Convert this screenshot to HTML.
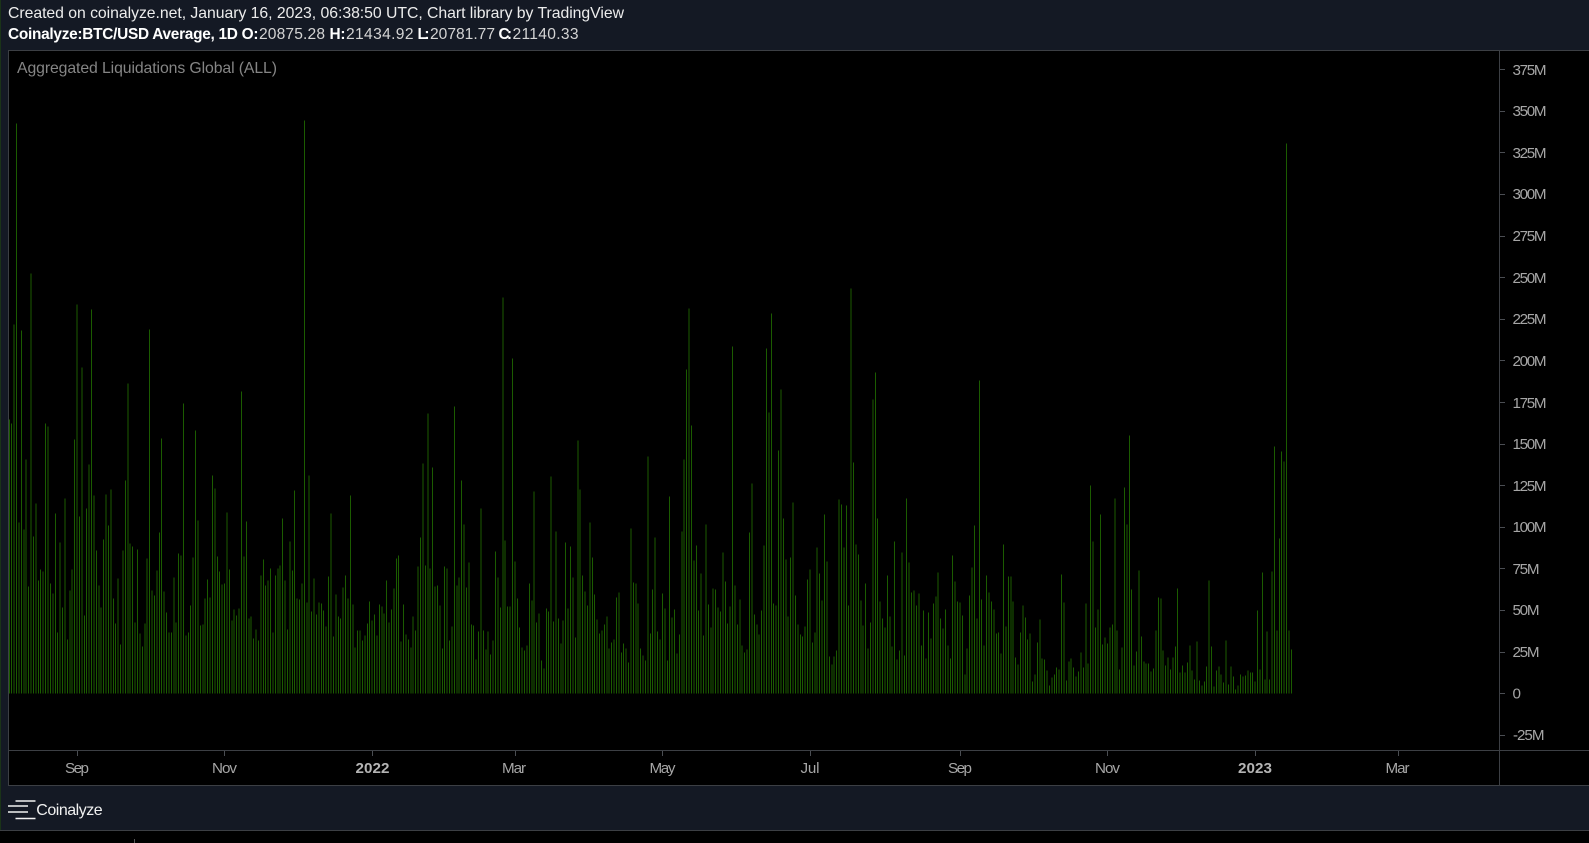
<!DOCTYPE html>
<html><head><meta charset="utf-8"><title>Aggregated Liquidations Global (ALL)</title>
<style>
html,body{margin:0;padding:0;background:#000;width:1589px;height:843px;overflow:hidden}
svg{display:block;font-family:"Liberation Sans",sans-serif}
.t{font-size:15.8px;fill:#ececec}
.b{font-size:15.4px;font-weight:700;fill:#fff}
.v{font-size:15.6px;fill:#d4d4d4}
.a{font-size:15.2px;fill:#a6a6a6}
.x{font-size:15.2px;fill:#a6a6a6;text-anchor:middle}
.y{font-size:15.2px;font-weight:700;fill:#b4b4b4;text-anchor:middle}
</style></head><body>
<svg width="1589" height="843" viewBox="0 0 1589 843" xmlns="http://www.w3.org/2000/svg">
<rect width="1589" height="843" fill="#000"/>
<rect width="1589" height="830" fill="#141924"/>
<rect width="1" height="830" fill="#1a3318"/>
<rect x="9" y="51" width="1580" height="734" fill="#000"/>
<rect x="8" y="50" width="1581" height="1" fill="#3c3f44"/>
<rect x="8" y="50" width="1" height="736" fill="#3c3f44"/>
<rect x="8" y="785" width="1581" height="1" fill="#3c3f44"/>
<rect x="9" y="750" width="1580" height="1" fill="#3c3f44"/>
<rect x="1499" y="51" width="1" height="734" fill="#3c3f44"/>
<rect y="830" width="1589" height="1" fill="#3c3f44"/>
<rect x="134" y="839" width="1" height="4" fill="#555"/>

<text class="t" x="8" y="18" textLength="616" lengthAdjust="spacing">Created on coinalyze.net, January 16, 2023, 06:38:50 UTC, Chart library by TradingView</text>
<text class="b" x="8" y="39" textLength="250.5" lengthAdjust="spacing">Coinalyze:BTC/USD Average, 1D O:</text>
<text class="v" x="259" y="39" textLength="66" lengthAdjust="spacing">20875.28</text>
<text class="b" x="329.5" y="39" textLength="16" lengthAdjust="spacing">H:</text>
<text class="v" x="346" y="39" textLength="67.5" lengthAdjust="spacing">21434.92</text>
<text class="b" x="417.5" y="39" textLength="12" lengthAdjust="spacing">L:</text>
<text class="v" x="430" y="39" textLength="65" lengthAdjust="spacing">20781.77</text>
<text class="b" x="498.5" y="39" textLength="13.5" lengthAdjust="spacing">C:</text>
<text class="v" x="512.5" y="39" textLength="66" lengthAdjust="spacing">21140.33</text>
<text x="17" y="73" font-size="15.8" fill="#858585" textLength="260" lengthAdjust="spacing">Aggregated Liquidations Global (ALL)</text>

<path fill="none" stroke="#1b5c00" stroke-width="1" shape-rendering="crispEdges" d="
M9.3 693.5v-274m2.419 274v-270m2.419 270v-369m2.419 369v-570m2.419 570v-171m2.419 171v-363m2.419 363v-164m2.419 164v-234m2.419 234v-107m2.419 107v-420m2.419 420v-157m2.419 157v-190m2.419 190v-113m2.419 113v-124m2.419 124v-122m2.419 122v-270m2.419 270v-267m2.419 267v-110m2.419 110v-100m2.419 100v-180m2.419 180v-61m2.419 61v-151m2.419 151v-86m2.419 86v-195m2.419 195v-54m2.419 54v-103m2.419 103v-124m2.419 124v-254m2.419 254v-389m2.419 389v-177m2.419 177v-326m2.419 326v-78m2.419 78v-185m2.419 185v-229m2.419 229v-384m2.419 384v-198m2.419 198v-143m2.419 143v-108m2.419 108v-86m2.419 86v-154m2.419 154v-199m2.419 199v-168m2.419 168v-204m2.419 204v-95m2.419 95v-70m2.419 70v-115m2.419 115v-49m2.419 49v-143m2.419 143v-213m2.419 213v-310m2.419 310v-150m2.419 150v-147m2.419 147v-71m2.419 71v-144m2.419 144v-60m2.419 60v-47m2.419 47v-70m2.419 70v-135m2.419 135v-364m2.419 364v-103m2.419 103v-98m2.419 98v-123m2.419 123v-161m2.419 161v-255m2.419 255v-102m2.419 102v-81m2.419 81v-61m2.419 61v-61m2.419 61v-116m2.419 116v-71m2.419 71v-140m2.419 140v-138m2.419 138v-290m2.419 290v-58m2.419 58v-61
M190.7 693.5v-88m2.419 88v-136m2.419 136v-263m2.419 263v-173m2.419 173v-68m2.419 68v-69m2.419 69v-95m2.419 95v-114m2.419 114v-96m2.419 96v-218m2.419 218v-205m2.419 205v-137m2.419 137v-122m2.419 122v-109m2.419 109v-110m2.419 110v-181m2.419 181v-124m2.419 124v-73m2.419 73v-84m2.419 84v-78m2.419 78v-85m2.419 85v-302m2.419 302v-137m2.419 137v-172m2.419 172v-75m2.419 75v-77m2.419 77v-55m2.419 55v-64m2.419 64v-53m2.419 53v-118m2.419 118v-134m2.419 134v-108m2.419 108v-113m2.419 113v-125m2.419 125v-61m2.419 61v-118m2.419 118v-125m2.419 125v-128m2.419 128v-175m2.419 175v-113m2.419 113v-64m2.419 64v-152m2.419 152v-123m2.419 123v-203m2.419 203v-95m2.419 95v-94m2.419 94v-110m2.419 110v-573m2.419 573v-91m2.419 91v-218m2.419 218v-82m2.419 82v-115m2.419 115v-79m2.419 79v-91m2.419 91v-90m2.419 90v-83m2.419 83v-67m2.419 67v-117m2.419 117v-180m2.419 180v-57m2.419 57v-99m2.419 99v-77m2.419 77v-75m2.419 75v-106m2.419 106v-118m2.419 118v-95m2.419 95v-198m2.419 198v-89m2.419 89v-46m2.419 46v-63m2.419 63v-63m2.419 63v-53m2.419 53v-58m2.419 58v-70m2.419 70v-92m2.419 92v-73m2.419 73v-79m2.419 79v-58m2.419 58v-89
M381.8 693.5v-87m2.419 87v-80m2.419 80v-113m2.419 113v-71m2.419 71v-84m2.419 84v-105m2.419 105v-135m2.419 135v-138m2.419 138v-52m2.419 52v-89m2.419 89v-59m2.419 59v-54m2.419 54v-46m2.419 46v-77m2.419 77v-63m2.419 63v-127m2.419 127v-156m2.419 156v-230m2.419 230v-128m2.419 128v-280m2.419 280v-125m2.419 125v-226m2.419 226v-107m2.419 107v-108m2.419 108v-88m2.419 88v-45m2.419 45v-127m2.419 127v-125m2.419 125v-53m2.419 53v-67m2.419 67v-287m2.419 287v-108m2.419 108v-116m2.419 116v-213m2.419 213v-169m2.419 169v-106m2.419 106v-131m2.419 131v-69m2.419 69v-68m2.419 68v-34m2.419 34v-62m2.419 62v-185m2.419 185v-63m2.419 63v-44m2.419 44v-62m2.419 62v-39m2.419 39v-53m2.419 53v-142m2.419 142v-116m2.419 116v-86m2.419 86v-396m2.419 396v-153m2.419 153v-87m2.419 87v-87m2.419 87v-335m2.419 335v-132m2.419 132v-95m2.419 95v-66m2.419 66v-46m2.419 46v-43m2.419 43v-48m2.419 48v-110m2.419 110v-93m2.419 93v-202m2.419 202v-71m2.419 71v-80m2.419 80v-33m2.419 33v-25m2.419 25v-85m2.419 85v-82m2.419 82v-217m2.419 217v-72m2.419 72v-162m2.419 162v-75m2.419 75v-50m2.419 50v-73m2.419 73v-151m2.419 151v-85
M570.5 693.5v-147m2.419 147v-116m2.419 116v-56m2.419 56v-253m2.419 253v-204m2.419 204v-118m2.419 118v-102m2.419 102v-88m2.419 88v-171m2.419 171v-136m2.419 136v-99m2.419 99v-74m2.419 74v-60m2.419 60v-63m2.419 63v-69m2.419 69v-77m2.419 77v-45m2.419 45v-51m2.419 51v-54m2.419 54v-96m2.419 96v-101m2.419 101v-41m2.419 41v-50m2.419 50v-45m2.419 45v-31m2.419 31v-165m2.419 165v-111m2.419 111v-110m2.419 110v-90m2.419 90v-45m2.419 45v-38m2.419 38v-33m2.419 33v-237m2.419 237v-60m2.419 60v-104m2.419 104v-156m2.419 156v-62m2.419 62v-54m2.419 54v-100m2.419 100v-85m2.419 85v-33m2.419 33v-197m2.419 197v-76m2.419 76v-84m2.419 84v-40m2.419 40v-59m2.419 59v-162m2.419 162v-234m2.419 234v-324m2.419 324v-385m2.419 385v-268m2.419 268v-133m2.419 133v-148m2.419 148v-83m2.419 83v-120m2.419 120v-58m2.419 58v-169m2.419 169v-89m2.419 89v-66m2.419 66v-105m2.419 105v-104m2.419 104v-86m2.419 86v-82m2.419 82v-141m2.419 141v-112m2.419 112v-70m2.419 70v-87m2.419 87v-347m2.419 347v-108m2.419 108v-69m2.419 69v-94m2.419 94v-48m2.419 48v-41m2.419 41v-44m2.419 44v-161m2.419 161v-210m2.419 210v-79m2.419 79v-69m2.419 69v-59
M761.6 693.5v-83m2.419 83v-148m2.419 148v-345m2.419 345v-281m2.419 281v-380m2.419 380v-90m2.419 90v-88m2.419 88v-243m2.419 243v-304m2.419 304v-175m2.419 175v-134m2.419 134v-77m2.419 77v-136m2.419 136v-191m2.419 191v-98m2.419 98v-69m2.419 69v-59m2.419 59v-57m2.419 57v-67m2.419 67v-114m2.419 114v-124m2.419 124v-51m2.419 51v-61m2.419 61v-146m2.419 146v-120m2.419 120v-93m2.419 93v-179m2.419 179v-132m2.419 132v-37m2.419 37v-29m2.419 29v-37m2.419 37v-43m2.419 43v-194m2.419 194v-189m2.419 189v-146m2.419 146v-188m2.419 188v-88m2.419 88v-405m2.419 405v-231m2.419 231v-149m2.419 149v-139m2.419 139v-93m2.419 93v-68m2.419 68v-110m2.419 110v-45m2.419 45v-71m2.419 71v-294m2.419 294v-321m2.419 321v-175m2.419 175v-92m2.419 92v-75m2.419 75v-66m2.419 66v-118m2.419 118v-77m2.419 77v-47m2.419 47v-152m2.419 152v-34m2.419 34v-43m2.419 43v-141m2.419 141v-38m2.419 38v-195m2.419 195v-131m2.419 131v-101m2.419 101v-103m2.419 103v-88m2.419 88v-100m2.419 100v-48m2.419 48v-83m2.419 83v-35m2.419 35v-81m2.419 81v-55m2.419 55v-90m2.419 90v-97m2.419 97v-121m2.419 121v-75m2.419 75v-65m2.419 65v-84m2.419 84v-48
M950.3 693.5v-35m2.419 35v-138m2.419 138v-112m2.419 112v-92m2.419 92v-91m2.419 91v-78m2.419 78v-19m2.419 19v-45m2.419 45v-98m2.419 98v-126m2.419 126v-168m2.419 168v-75m2.419 75v-313m2.419 313v-94m2.419 94v-48m2.419 48v-118m2.419 118v-101m2.419 101v-92m2.419 92v-84m2.419 84v-60m2.419 60v-61m2.419 61v-40m2.419 40v-149m2.419 149v-67m2.419 67v-117m2.419 117v-117m2.419 117v-92m2.419 92v-36m2.419 36v-29m2.419 29v-61m2.419 61v-88m2.419 88v-76m2.419 76v-54m2.419 54v-60m2.419 60v-12m2.419 12v-19m2.419 19v-51m2.419 51v-74m2.419 74v-35m2.419 35v-34m2.419 34v-23m2.419 23v-8m2.419 8v-16m2.419 16v-19m2.419 19v-26m2.419 26v-24m2.419 24v-119m2.419 119v-91m2.419 91v-13m2.419 13v-32m2.419 32v-35m2.419 35v-26m2.419 26v-17m2.419 17v-22m2.419 22v-41m2.419 41v-26m2.419 26v-90m2.419 90v-30m2.419 30v-208m2.419 208v-152m2.419 152v-66m2.419 66v-84m2.419 84v-179m2.419 179v-49m2.419 49v-56m2.419 56v-50m2.419 50v-66m2.419 66v-69m2.419 69v-195m2.419 195v-63m2.419 63v-24m2.419 24v-46m2.419 46v-206m2.419 206v-169m2.419 169v-258m2.419 258v-104m2.419 104v-28m2.419 28v-42m2.419 42v-123
M1141.4 693.5v-57m2.419 57v-32m2.419 32v-30m2.419 30v-30m2.419 30v-22m2.419 22v-25m2.419 25v-63m2.419 63v-96m2.419 96v-95m2.419 95v-43m2.419 43v-28m2.419 28v-36m2.419 36v-24m2.419 24v-36m2.419 36v-47m2.419 47v-105m2.419 105v-21m2.419 21v-28m2.419 28v-21m2.419 21v-31m2.419 31v-48m2.419 48v-23m2.419 23v-14m2.419 14v-52m2.419 52v-13m2.419 13v-8m2.419 8v-12m2.419 12v-27m2.419 27v-113m2.419 113v-47m2.419 47v-7m2.419 7v-23m2.419 23v-27m2.419 27v-19m2.419 19v-11m2.419 11v-53m2.419 53v-9m2.419 9v-27m2.419 27v-17m2.419 17v-4m2.419 4v-8m2.419 8v-19m2.419 19v-17m2.419 17v-18m2.419 18v-23m2.419 23v-21m2.419 21v-21m2.419 21v-12m2.419 12v-83m2.419 83v-24m2.419 24v-121m2.419 121v-14m2.419 14v-62m2.419 62v-14m2.419 14v-122m2.419 122v-247m2.419 247v-63m2.419 63v-155m2.419 155v-242m2.419 242v-232m2.419 232v-550m2.419 550v-63m2.419 63v-44"/>

<path stroke="#4a4d52" stroke-width="1" fill="none" shape-rendering="crispEdges" d="M1500 69.5h5M1500 111.5h5M1500 152.5h5M1500 194.5h5M1500 236.5h5M1500 277.5h5M1500 319.5h5M1500 360.5h5M1500 402.5h5M1500 444.5h5M1500 485.5h5M1500 527.5h5M1500 568.5h5M1500 610.5h5M1500 652.5h5M1500 693.5h5M1500 735.5h5M77.5 751v5M224.5 751v5M372.5 751v5M515.5 751v5M662.5 751v5M810.5 751v5M960.5 751v5M1107.5 751v5M1255.5 751v5M1398.5 751v5"/>

<text class="a" x="1512.5" y="75" textLength="34" lengthAdjust="spacing">375M</text>
<text class="a" x="1512.5" y="116" textLength="34" lengthAdjust="spacing">350M</text>
<text class="a" x="1512.5" y="158" textLength="34" lengthAdjust="spacing">325M</text>
<text class="a" x="1512.5" y="199" textLength="34" lengthAdjust="spacing">300M</text>
<text class="a" x="1512.5" y="241" textLength="34" lengthAdjust="spacing">275M</text>
<text class="a" x="1512.5" y="283" textLength="34" lengthAdjust="spacing">250M</text>
<text class="a" x="1512.5" y="324" textLength="34" lengthAdjust="spacing">225M</text>
<text class="a" x="1512.5" y="366" textLength="34" lengthAdjust="spacing">200M</text>
<text class="a" x="1512.5" y="408" textLength="34" lengthAdjust="spacing">175M</text>
<text class="a" x="1512.5" y="449" textLength="34" lengthAdjust="spacing">150M</text>
<text class="a" x="1512.5" y="491" textLength="34" lengthAdjust="spacing">125M</text>
<text class="a" x="1512.5" y="532" textLength="34" lengthAdjust="spacing">100M</text>
<text class="a" x="1512.5" y="574" textLength="27" lengthAdjust="spacing">75M</text>
<text class="a" x="1512.5" y="615" textLength="27" lengthAdjust="spacing">50M</text>
<text class="a" x="1512.5" y="657" textLength="27" lengthAdjust="spacing">25M</text>
<text class="a" x="1512.5" y="698.500">0</text>
<text class="a" x="1513" y="740" textLength="31.5" lengthAdjust="spacing">-25M</text>

<text class="x" x="77" y="773" textLength="24" lengthAdjust="spacing">Sep</text>
<text class="x" x="224.5" y="773" textLength="25" lengthAdjust="spacing">Nov</text>
<text class="y" x="372.5" y="773" textLength="34" lengthAdjust="spacing">2022</text>
<text class="x" x="514" y="773" textLength="24" lengthAdjust="spacing">Mar</text>
<text class="x" x="662.5" y="773" textLength="26" lengthAdjust="spacing">May</text>
<text class="x" x="810" y="773" textLength="19" lengthAdjust="spacing">Jul</text>
<text class="x" x="960" y="773" textLength="24" lengthAdjust="spacing">Sep</text>
<text class="x" x="1107.5" y="773" textLength="25" lengthAdjust="spacing">Nov</text>
<text class="y" x="1255" y="773" textLength="34" lengthAdjust="spacing">2023</text>
<text class="x" x="1397.5" y="773" textLength="24" lengthAdjust="spacing">Mar</text>

<path stroke="#f2f2f2" fill="none" stroke-width="1.6" d="M15.5 801h20M8 806h20M8 812h20M15.5 818.500h20"/>
<text x="36.300" y="815" font-size="16" fill="#f0f0f0" textLength="66.300" lengthAdjust="spacing">Coinalyze</text>
</svg>
</body></html>
